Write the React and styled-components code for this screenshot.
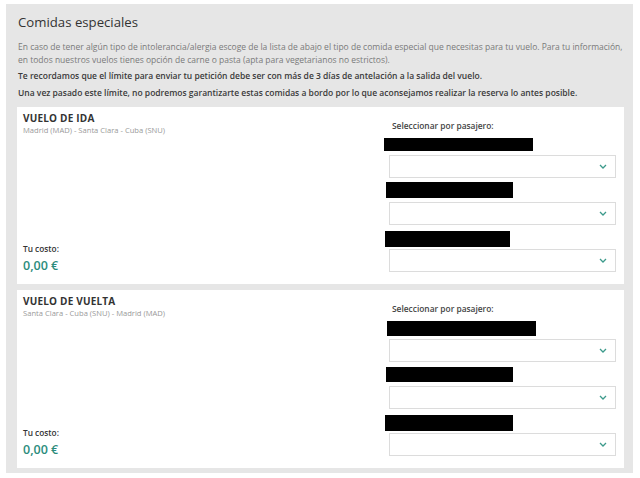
import React from "react"
import styled, { createGlobalStyle } from "styled-components"

const GlobalStyle = createGlobalStyle`
    body {
        margin: 0;
        background: #ffffff;
        font-family: "Open Sans", "Noto Sans", sans-serif;
    }
`
const Panel = styled.section`
    margin: 4px 7px 0 6px;
    padding: 8px 9px 5px 11px;
    background: #e6e6e6;
`
const Heading = styled.h1`
    margin: 0 0 0 1px;
    font-size: 13.2px;
    font-weight: 500;
    color: #333;
    line-height: 20px;
`
const Intro = styled.p`
    margin: 9px 0 0 1px;
    font-size: 8.5px;
    line-height: 12.5px;
    color: #7a7a7a;
`
const Notice = styled.p`
    margin: ${(p) => p.$top}px 0 0 1px;
    font-size: 8.5px;
    line-height: 12px;
    font-weight: 600;
    color: #3a3a3a;
`
const Cards = styled.div`
    margin-top: 8px;
    display: flex;
    flex-direction: column;
    gap: 6px;
`
const Card = styled.div`
    background: #ffffff;
    height: ${(p) => p.$height}px;
    display: flex;
    justify-content: space-between;
    box-sizing: border-box;
    padding: 0 8px 0 6px;
`
const FlightInfo = styled.div`
    display: flex;
    flex-direction: column;
    justify-content: space-between;
    padding: 4px 0 10px;
`
const FlightName = styled.h2`
    margin: 0;
    font-size: 10px;
    font-weight: 700;
    color: #333;
    line-height: 14px;
    letter-spacing: 0.2px;
`
const Route = styled.p`
    margin: 0;
    font-size: 7.6px;
    line-height: 10px;
    color: #999;
`
const CostLabel = styled.p`
    margin: 0;
    font-size: 8.3px;
    line-height: 12px;
    font-weight: 600;
    color: #333;
`
const Cost = styled.p`
    margin: 3px 0 0;
    font-size: 12.5px;
    line-height: 16px;
    font-weight: 600;
    color: #2b8c7c;
`
const Passengers = styled.div`
    width: 232px;
    display: flex;
    flex-direction: column;
    padding-top: ${(p) => p.$top}px;
`
const SelectLabel = styled.p`
    margin: 0 0 0 8px;
    font-size: 8.4px;
    line-height: 11px;
    font-weight: 600;
    color: #444;
`
const Redacted = styled.div`
    background: #000;
    width: ${(p) => p.$w}px;
    height: ${(p) => p.$h}px;
    margin-top: ${(p) => p.$top}px;
    margin-left: ${(p) => p.$left}px;
`
const Select = styled.div`
    margin: ${(p) => p.$top}px 0 0 5px;
    height: 23px;
    border: 1px solid #dcdcdc;
    box-sizing: border-box;
    display: flex;
    align-items: center;
    justify-content: flex-end;
    padding-right: 8px;
`

const Chevron = () => (
    <svg width="8" height="5" viewBox="0 0 8 5">
        <path d="M1 1l3 3 3-3" fill="none" stroke="#3c9a8b" strokeWidth="1.3" />
    </svg>
)

const flights = [
    {
        name: "VUELO DE IDA",
        route: "Madrid (MAD) - Santa Clara - Cuba (SNU)",
        height: 177,
        labelTop: 13,
        rows: [
            { w: 149, h: 13, top: 7, left: 0, sel: 4 },
            { w: 127, h: 16, top: 4, left: 2, sel: 4 },
            { w: 125, h: 16, top: 6, left: 1, sel: 2 },
        ],
    },
    {
        name: "VUELO DE VUELTA",
        route: "Santa Clara - Cuba (SNU) - Madrid (MAD)",
        height: 178,
        labelTop: 13,
        rows: [
            { w: 149, h: 15, top: 7, left: 3, sel: 3 },
            { w: 127, h: 15, top: 5, left: 2, sel: 4 },
            { w: 128, h: 16, top: 6, left: 1, sel: 2 },
        ],
    },
]

const FlightCard = ({ flight }) => (
    <Card $height={flight.height}>
        <FlightInfo>
            <div>
                <FlightName>{flight.name}</FlightName>
                <Route>{flight.route}</Route>
            </div>
            <div>
                <CostLabel>Tu costo:</CostLabel>
                <Cost>0,00 €</Cost>
            </div>
        </FlightInfo>
        <Passengers $top={flight.labelTop}>
            <SelectLabel>Seleccionar por pasajero:</SelectLabel>
            {flight.rows.map((r, i) => (
                <React.Fragment key={i}>
                    <Redacted $w={r.w} $h={r.h} $top={r.top} $left={r.left} />
                    <Select $top={r.sel}>
                        <Chevron />
                    </Select>
                </React.Fragment>
            ))}
        </Passengers>
    </Card>
)

const App = () => {
    return (
        <>
            <GlobalStyle />
            <Panel>
                <Heading>Comidas especiales</Heading>
                <Intro>
                    En caso de tener algún tipo de intolerancia/alergia escoge de la lista de abajo el tipo de comida especial que necesitas para tu vuelo. Para tu información, en todos nuestros vuelos tienes opción de carne o pasta (apta para vegetarianos no estrictos).
                </Intro>
                <Notice $top={4}>
                    Te recordamos que el límite para enviar tu petición debe ser con más de 3 días de antelación a la salida del vuelo.
                </Notice>
                <Notice $top={5}>
                    Una vez pasado este límite, no podremos garantizarte estas comidas a bordo por lo que aconsejamos realizar la reserva lo antes posible.
                </Notice>
                <Cards>
                    {flights.map((f) => (
                        <FlightCard key={f.name} flight={f} />
                    ))}
                </Cards>
            </Panel>
        </>
    )
}

export default App
